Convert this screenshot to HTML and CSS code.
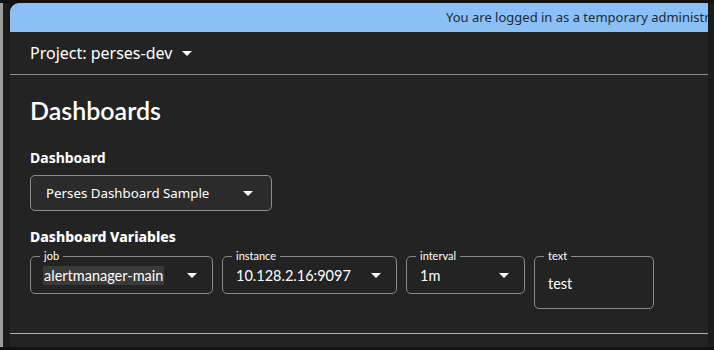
FILE: index.html
```html
<!DOCTYPE html>
<html>
<head>
  <title>Dashboards</title>
  <link rel="stylesheet" href="styles.css">
</head>
<body>
  <div class="frame">
    <div class="rail"></div>
    <div class="gutter"></div>
    <div class="panel">
      <div class="banner">You are logged in as a temporary administrator user. To harden security, create a permanent admin account.</div>
      <div class="project">
        <span>Project: perses-dev</span>
        <span class="caret"></span>
      </div>
      <div class="content">
        <h1 class="title">Dashboards</h1>
        <div class="label">Dashboard</div>
        <div class="select">
          <span>Perses Dashboard Sample</span>
          <span class="caret"></span>
        </div>
        <div class="label vars-label">Dashboard Variables</div>
        <div class="vars">
          <div class="field job">
            <span class="legend">job</span>
            <span class="value picked">alertmanager-main</span>
            <span class="caret"></span>
          </div>
          <div class="field instance">
            <span class="legend">instance</span>
            <span class="value">10.128.2.16:9097</span>
            <span class="caret"></span>
          </div>
          <div class="field interval">
            <span class="legend">interval</span>
            <span class="value">1m</span>
            <span class="caret"></span>
          </div>
          <div class="field textbox">
            <span class="legend">text</span>
            <span class="value">test</span>
          </div>
        </div>
      </div>
      <div class="footer-line"></div>
    </div>
    <div class="gutter right"></div>
  </div>
</body>
</html>
```

FILE: styles.css
```css
body {
  margin: 0;
  background-color: #111;
  font-family: "Noto Sans", sans-serif;
  color: #fff;
}

.frame {
  display: flex;
  margin-top: 3px;
  height: 344px;
}

.rail {
  width: 3px;
  background-color: #9d9d9d;
}

.gutter {
  width: 7px;
  background-color: #1b1b1b;
}

.gutter.right {
  width: 6px;
}

.panel {
  flex: 1;
  min-width: 0;
  display: flex;
  flex-direction: column;
  background-color: #232323;
  border-top-left-radius: 9px;
  overflow: hidden;
}

.banner {
  height: 29px;
  line-height: 29px;
  padding-left: 436px;
  background-color: #8bc0f6;
  color: #1f2a36;
  font-size: 13px;
  white-space: nowrap;
  overflow: hidden;
}

.project {
  display: flex;
  align-items: center;
  gap: 10px;
  height: 42px;
  padding-left: 20px;
  font-size: 16px;
  border-bottom: 1px solid #8a8a8a;
}

.caret {
  width: 0;
  height: 0;
  border-left: 5px solid transparent;
  border-right: 5px solid transparent;
  border-top: 5px solid #fff;
}

.content {
  flex: 1;
  padding: 19px 20px 0;
}

.title {
  margin: 0 0 22px;
  font-family: Lato, sans-serif;
  font-size: 25px;
  font-weight: 600;
  line-height: 32px;
}

.label {
  font-size: 14px;
  font-weight: 700;
  line-height: 20px;
}

.select {
  display: flex;
  align-items: center;
  justify-content: space-between;
  box-sizing: border-box;
  width: 242px;
  height: 36px;
  margin-top: 7px;
  padding: 0 18px 0 15px;
  background-color: #2b2b2b;
  border: 1px solid #8d8d8d;
  border-radius: 5px;
  font-size: 13.3px;
}

.vars-label {
  margin-top: 16px;
  font-weight: 800;
}

.vars {
  display: flex;
  align-items: flex-start;
  gap: 9px;
  margin-top: 9px;
  font-family: Lato, sans-serif;
}

.field {
  position: relative;
  display: flex;
  align-items: center;
  justify-content: space-between;
  box-sizing: border-box;
  height: 38px;
  padding: 0 15px 0 13px;
  border: 1px solid #8a8a8a;
  border-radius: 5px;
  font-size: 14.5px;
}

.legend {
  position: absolute;
  top: -7px;
  left: 9px;
  padding: 0 4px;
  background-color: #232323;
  font-size: 11px;
  line-height: 12px;
}

.picked {
  background-color: #3a3a3a;
  padding: 1px 1px;
  margin-left: -1px;
}

.job {
  width: 183px;
}

.instance {
  width: 175px;
}

.interval {
  width: 119px;
}

.textbox {
  width: 120px;
  height: 53px;
  padding-top: 2px;
}

.footer-line {
  height: 1px;
  margin-bottom: 13px;
  background-color: #b0b0b0;
}
```
